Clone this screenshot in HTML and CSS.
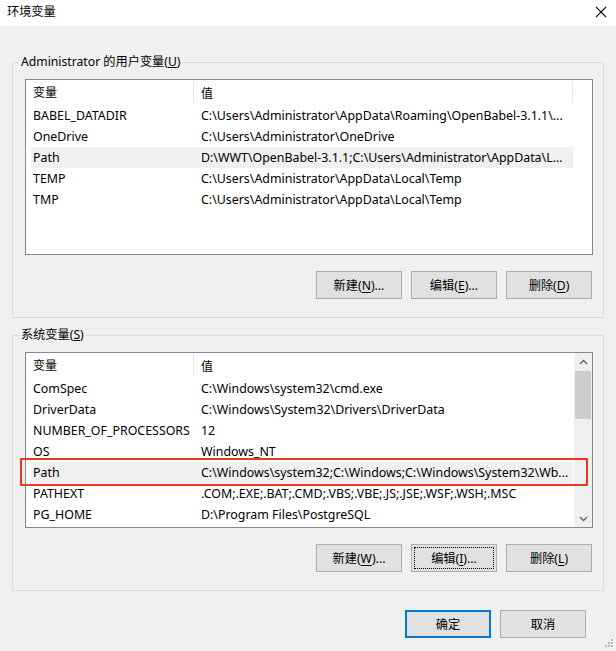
FILE: index.html
```html
<!DOCTYPE html>
<html lang="zh-CN">
<head>
<meta charset="utf-8">
<title>环境变量</title>
<link rel="stylesheet" href="styles.css">
</head>
<body>
<div class="window">
  <div class="titlebar">
    <span class="title">环境变量</span>
    <svg class="close" width="12" height="12" viewBox="0 0 12 12"><path d="M1 1L11 11M11 1L1 11" stroke="#111" stroke-width="1.1" fill="none"/></svg>
  </div>
  <div class="content">
    <fieldset class="group">
      <legend>Administrator 的用户变量(<u>U</u>)</legend>
      <div class="list">
        <div class="items">
          <div class="head"><div class="c1">变量</div><div class="c2">值</div><div class="hend"></div></div>
          <div class="row"><div class="c1">BABEL_DATADIR</div><div class="c2">C:\Users\Administrator\AppData\Roaming\OpenBabel-3.1.1\...</div></div>
          <div class="row"><div class="c1">OneDrive</div><div class="c2">C:\Users\Administrator\OneDrive</div></div>
          <div class="row sel"><div class="c1">Path</div><div class="c2">D:\WWT\OpenBabel-3.1.1;C:\Users\Administrator\AppData\L...</div></div>
          <div class="row"><div class="c1">TEMP</div><div class="c2">C:\Users\Administrator\AppData\Local\Temp</div></div>
          <div class="row"><div class="c1">TMP</div><div class="c2">C:\Users\Administrator\AppData\Local\Temp</div></div>
        </div>
      </div>
      <div class="buttons">
        <button class="btn">新建(<u>N</u>)...</button>
        <button class="btn">编辑(<u>E</u>)...</button>
        <button class="btn">删除(<u>D</u>)</button>
      </div>
    </fieldset>

    <fieldset class="group g2">
      <legend>系统变量(<u>S</u>)</legend>
      <div class="list">
        <div class="items">
          <div class="head"><div class="c1">变量</div><div class="c2">值</div></div>
          <div class="row"><div class="c1">ComSpec</div><div class="c2">C:\Windows\system32\cmd.exe</div></div>
          <div class="row"><div class="c1">DriverData</div><div class="c2">C:\Windows\System32\Drivers\DriverData</div></div>
          <div class="row"><div class="c1">NUMBER_OF_PROCESSORS</div><div class="c2">12</div></div>
          <div class="row"><div class="c1">OS</div><div class="c2">Windows_NT</div></div>
          <div class="row sel"><div class="c1">Path</div><div class="c2">C:\Windows\system32;C:\Windows;C:\Windows\System32\Wb...</div></div>
          <div class="row"><div class="c1">PATHEXT</div><div class="c2">.COM;.EXE;.BAT;.CMD;.VBS;.VBE;.JS;.JSE;.WSF;.WSH;.MSC</div></div>
          <div class="row"><div class="c1">PG_HOME</div><div class="c2">D:\Program Files\PostgreSQL</div></div>
        </div>
        <div class="scrollbar">
          <div class="arrow"><svg width="9" height="6" viewBox="0 0 9 6"><path d="M1 5L4.5 1.5L8 5" stroke="#606060" stroke-width="1.3" fill="none"/></svg></div>
          <div class="track"><div class="thumb"></div></div>
          <div class="arrow"><svg width="9" height="6" viewBox="0 0 9 6"><path d="M1 1L4.5 4.5L8 1" stroke="#606060" stroke-width="1.3" fill="none"/></svg></div>
        </div>
      </div>
      <div class="buttons">
        <button class="btn">新建(<u>W</u>)...</button>
        <button class="btn focus">编辑(<u>I</u>)...</button>
        <button class="btn">删除(<u>L</u>)</button>
      </div>
    </fieldset>

    <div class="footer">
      <button class="btn default">确定</button>
      <button class="btn">取消</button>
    </div>
  </div>
  <div class="highlight"></div>
  <svg class="grip" width="12" height="12" viewBox="0 0 12 12">
    <g fill="#b8b8b8"><rect x="9" y="1" width="2" height="2"/><rect x="6" y="4" width="2" height="2"/><rect x="9" y="4" width="2" height="2"/><rect x="3" y="7" width="2" height="2"/><rect x="6" y="7" width="2" height="2"/><rect x="9" y="7" width="2" height="2"/></g>
  </svg>
</div>
</body>
</html>
```

FILE: styles.css
```css
* { box-sizing: border-box; }
html, body { margin: 0; padding: 0; }
body {
  font-family: "Noto Sans", "Noto Sans CJK SC", sans-serif;
  font-size: 12px;
  color: #000;
  background: #f0f0f0;
}
.window {
  position: relative;
  width: 616px;
  height: 651px;
  background: #f0f0f0;
  overflow: hidden;
}
.titlebar {
  height: 26px;
  background: #fff;
  display: flex;
  align-items: center;
  justify-content: space-between;
  padding: 0 9px 2px 7px;
}
.title { font-size: 12.2px; line-height: 16px; }
.close { display: block; }

.content {
  padding: 28px 0 0 12px;
}
.group {
  width: 592px;
  margin: 0;
  border: 1px solid #dcdcdc;
  padding: 9px 10px 18px 6px;
  min-width: 0;
}
.group legend {
  padding: 0 2px;
  line-height: 16px;
  font-size: 12.2px;
}
.g2 { margin-top: 9px; }

.list {
  margin-left: 6px;
  width: 568px;
  height: 176px;
  border: 1px solid #828790;
  background: #fff;
  display: flex;
  justify-content: space-between;
  font-size: 12.4px;
}
.items {
  margin-left: 5px;
  width: 542px;
  display: flex;
  flex-direction: column;
}
.head, .row {
  display: flex;
  white-space: nowrap;
}
.head { height: 25px; align-items: center; position: relative; font-size: 12px; }
.row { height: 21px; align-items: center; }
.head .c1 {
  border-right: 1px solid #e5e5e5;
  height: 22px;
  align-self: flex-start;
  display: flex;
  align-items: center;
  margin-top: 1px;
}
.hend {
  position: absolute;
  right: 0;
  top: 1px;
  width: 1px;
  height: 22px;
  background: #e5e5e5;
}
.c1 {
  width: 163px;
  padding-left: 2px;
  overflow: hidden;
  flex: none;
}
.c2 {
  padding-left: 7px;
  overflow: hidden;
  flex: 1;
}
.row.sel { background: #f0f0f0; }

.scrollbar {
  width: 18px;
  background: #f0f0f0;
  display: flex;
  flex-direction: column;
}
.arrow {
  height: 17px;
  display: flex;
  align-items: center;
  justify-content: center;
}
.arrow svg { display: block; }
.track { flex: 1; padding: 1px 1px; }
.thumb { height: 48px; background: #cdcdcd; }

.buttons {
  display: flex;
  justify-content: flex-end;
  gap: 9px;
  margin-top: 16px;
  padding-right: 1px;
}
.btn {
  position: relative;
  width: 86px;
  height: 28px;
  background: #e1e1e1;
  border: 1px solid #adadad;
  font: inherit;
  font-size: 12.2px;
  color: #000;
  padding: 0;
  margin: 0;
}
.btn u { text-underline-offset: 2px; }
.btn.focus::after {
  content: "";
  position: absolute;
  inset: 2px;
  border: 1px dotted #000;
}
.btn.default { border: 2px solid #0078d7; }

.footer {
  display: flex;
  justify-content: flex-end;
  gap: 9px;
  margin-top: 19px;
  padding-right: 30px;
}

.highlight {
  position: absolute;
  left: 20px;
  top: 458px;
  width: 568px;
  height: 28px;
  border: 2px solid #e63c1e;
}
.grip {
  position: absolute;
  right: 2px;
  bottom: 1px;
}
```
